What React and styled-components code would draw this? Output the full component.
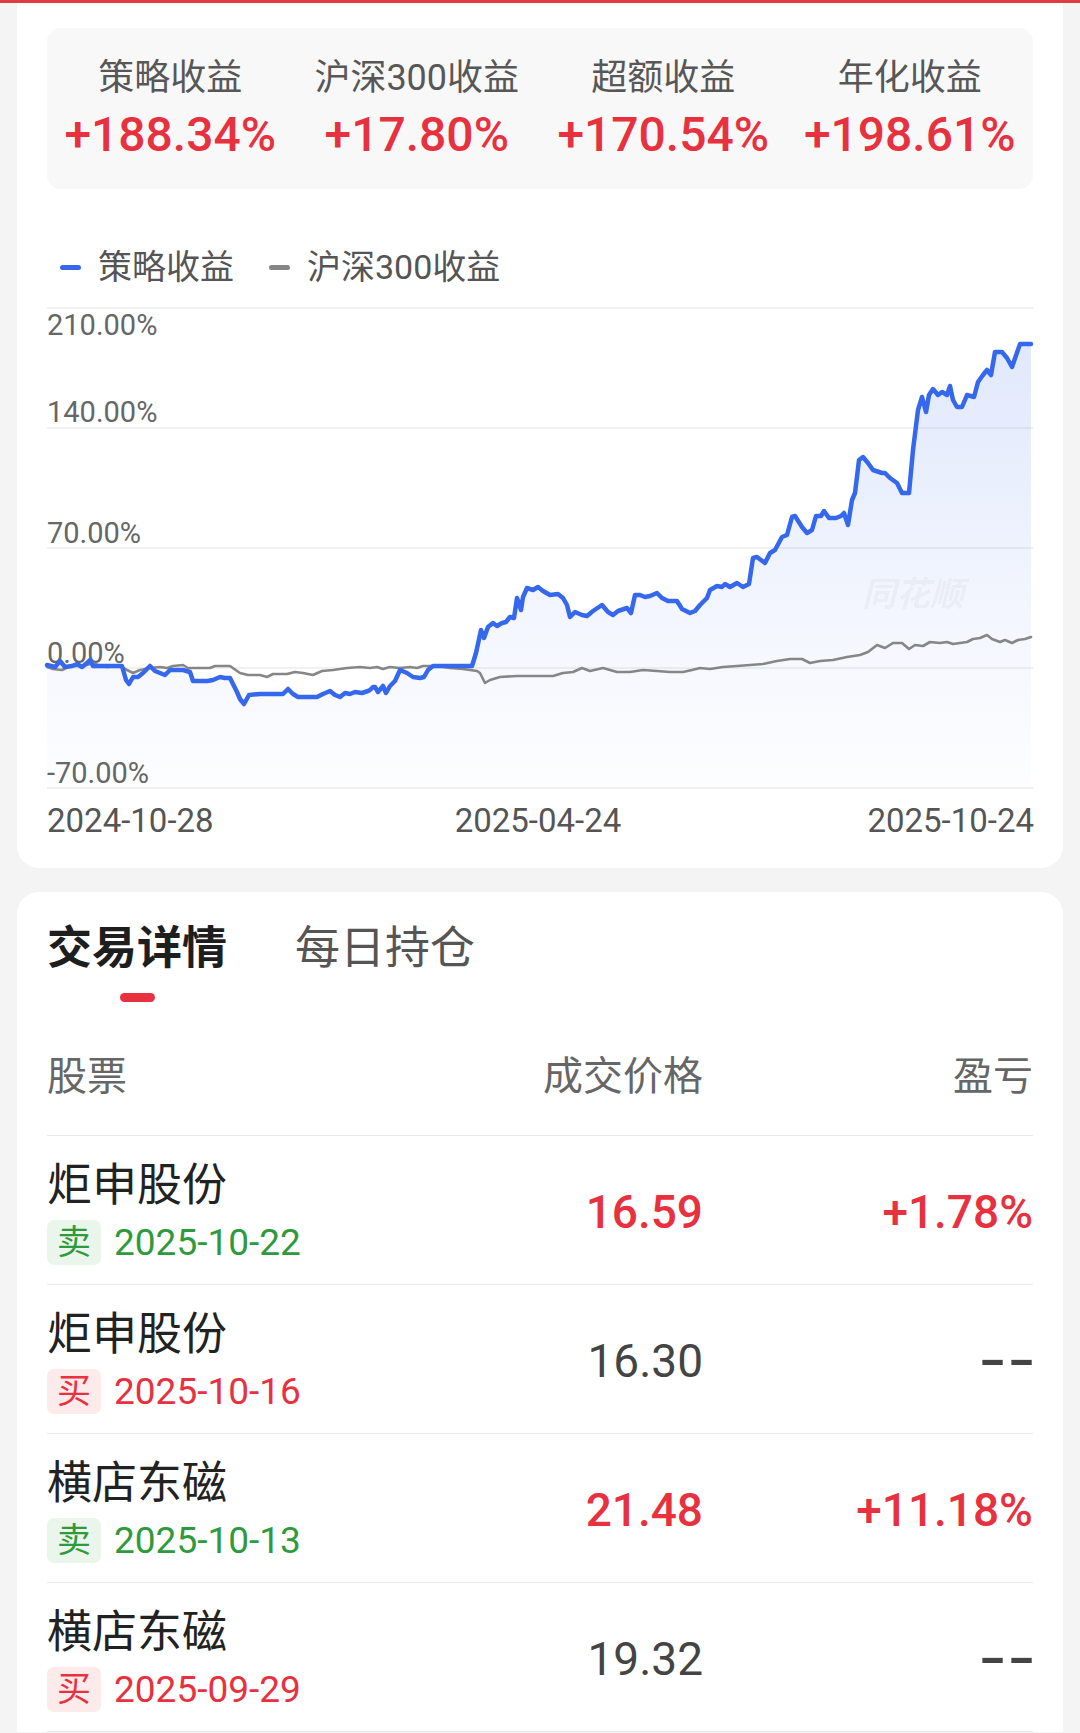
import React from "react";
import styled, { createGlobalStyle } from "styled-components";

const GlobalStyle = createGlobalStyle`
  html, body { margin: 0; padding: 0; background: #f4f4f4; }
  body { font-family: Roboto, "Noto Sans CJK SC", sans-serif; -webkit-font-smoothing: antialiased; }
  * { box-sizing: border-box; }
`;

const RED = "#e8313f";
const GREEN = "#2e9a3b";

const Page = styled.div`
  width: 1080px;
  min-height: 1733px;
  background: #f4f4f4;
  overflow: hidden;
`;

const TopBar = styled.div`
  height: 3px;
  background: #e03a45;
`;

const Card = styled.section`
  margin: ${(p) => p.$mt}px 17px 0;
  background: #fff;
  border-radius: ${(p) => p.$radius};
  padding: ${(p) => p.$pad};
`;

const StatsBox = styled.div`
  display: grid;
  grid-template-columns: repeat(4, 1fr);
  height: 161px;
  padding-top: 28px;
  background: #f8f8f8;
  border-radius: 14px;
`;

const Stat = styled.div`
  display: flex;
  flex-direction: column;
  align-items: center;
`;

const StatLabel = styled.div`
  font-size: 36px;
  line-height: 44px;
  color: #575757;
  white-space: nowrap;
`;

const StatValue = styled.div`
  margin-top: 6px;
  font-size: 48px;
  line-height: 58px;
  font-weight: 500;
  color: ${RED};
  white-space: nowrap;
`;

const Legend = styled.div`
  display: flex;
  align-items: center;
  gap: 35px;
  height: 40px;
  margin-top: 58px;
  padding-left: 13px;
`;

const LegendItem = styled.div`
  display: flex;
  align-items: center;
  gap: 17px;
  font-size: 34px;
  line-height: 40px;
  color: #555;
`;

const Swatch = styled.span`
  width: 21px;
  height: 5px;
  border-radius: 3px;
  background: ${(p) => p.$color};
`;

const ChartSvg = styled.svg`
  display: block;
  width: 986px;
  height: 560px;
  overflow: visible;
`;

const Tabs = styled.div`
  display: flex;
  gap: 68px;
`;

const Tab = styled.div`
  display: flex;
  flex-direction: column;
  align-items: center;
  font-size: 45px;
  line-height: 60px;
  font-weight: ${(p) => (p.$active ? 700 : 400)};
  color: ${(p) => (p.$active ? "#1e1e1e" : "#555")};
`;

const TabIndicator = styled.span`
  margin-top: 14px;
  width: 35px;
  height: 9px;
  border-radius: 5px;
  background: ${(p) => (p.$active ? RED : "transparent")};
`;

const TableRow = styled.div`
  display: grid;
  grid-template-columns: 1fr 200px 330px;
  align-items: center;
  border-bottom: 1px solid #e9e9e9;
  padding: ${(p) => p.$pad};
`;

const HeadCell = styled.div`
  font-size: 40px;
  line-height: 50px;
  color: #666;
  text-align: ${(p) => p.$align || "left"};
`;

const StockCell = styled.div`
  display: flex;
  flex-direction: column;
`;

const StockName = styled.div`
  font-size: 45px;
  line-height: 54px;
  color: #222;
`;

const Meta = styled.div`
  display: flex;
  align-items: center;
  gap: 13px;
  margin-top: 7px;
`;

const Badge = styled.span`
  height: 45px;
  padding: 0 10px;
  border-radius: 7px;
  font-size: 34px;
  line-height: 45px;
  color: ${(p) => (p.$sell ? GREEN : RED)};
  background: ${(p) => (p.$sell ? "#eaf6ec" : "#fdeaeb")};
`;

const DateText = styled.span`
  font-size: 37px;
  line-height: 45px;
  color: ${(p) => (p.$sell ? GREEN : RED)};
`;

const NumCell = styled.div`
  font-size: 46px;
  line-height: 56px;
  font-weight: ${(p) => (p.$red ? 500 : 400)};
  text-align: right;
  color: ${(p) => (p.$red ? RED : "#444")};
`;

const Placeholder = styled.span`
  display: inline-block;
  margin-right: -3px;
  transform: scaleX(1.6);
  transform-origin: right center;
  font-weight: 700;
`;

const blue = [
  [47,665],[55,667],[60,661],[65,667],[72,666],[77,664],[82,667],[87,663],[90,660],[93,666],[107,666],[122,666],[126,680],[129,684],[133,677],[138,677],[143,673],[150,666],[155,671],[160,673],[165,675],[170,670],[177,670],[183,670],[190,672],[193,681],[200,681],[207,681],[213,680],[220,677],[225,678],[230,678],[237,692],[240,699],[244,704],[249,695],[260,694],[273,694],[283,694],[288,689],[293,694],[298,697],[307,697],[317,697],[323,694],[330,691],[335,695],[340,697],[345,693],[350,694],[355,692],[362,693],[368,691],[370,690],[373,687],[375,687],[378,692],[383,686],[386,693],[390,686],[395,681],[400,670],[407,673],[413,677],[420,678],[424,677],[428,670],[433,666],[453,666],[472,666],[476,653],[481,630],[484,638],[488,627],[493,623],[497,626],[502,623],[506,622],[510,617],[514,618],[517,598],[521,610],[523,597],[527,588],[533,590],[538,587],[543,591],[550,595],[558,594],[563,598],[567,605],[570,617],[575,612],[582,615],[587,616],[593,611],[602,605],[608,612],[613,615],[618,611],[627,608],[631,613],[635,595],[640,595],[645,597],[650,596],[657,593],[662,598],[668,601],[677,601],[682,609],[690,613],[695,611],[700,605],[707,598],[710,590],[717,586],[722,587],[725,584],[730,587],[737,583],[743,587],[749,584],[753,558],[757,557],[765,563],[770,553],[775,550],[782,537],[787,535],[792,517],[795,516],[802,527],[807,533],[812,530],[816,516],[821,516],[824,511],[829,518],[836,518],[841,516],[844,513],[848,525],[852,500],[855,493],[859,460],[863,457],[868,463],[873,470],[882,473],[885,473],[890,478],[897,483],[902,493],[909,493],[913,450],[918,410],[922,397],[926,412],[929,395],[933,389],[938,395],[942,392],[947,395],[950,386],[953,400],[957,407],[962,407],[967,395],[974,397],[978,382],[983,375],[987,370],[991,375],[995,352],[1002,352],[1007,358],[1012,367],[1020,344],[1025,344],[1031,344]
];

const grey = [
  [47,667],[53,669],[62,670],[68,667],[77,666],[87,665],[93,663],[100,666],[107,667],[120,666],[127,670],[133,673],[140,670],[150,668],[160,667],[167,668],[173,666],[183,665],[188,668],[197,668],[210,668],[215,666],[230,666],[240,673],[248,675],[260,675],[267,677],[273,674],[287,674],[295,672],[303,673],[313,675],[322,671],[333,670],[340,669],[347,668],[360,667],[370,668],[377,667],[383,669],[390,667],[400,668],[410,667],[417,668],[423,666],[437,666],[450,668],[463,669],[477,671],[480,673],[485,683],[490,680],[500,677],[517,676],[537,676],[553,676],[563,673],[573,672],[582,668],[590,671],[603,668],[617,672],[630,672],[643,670],[657,671],[670,672],[683,672],[692,670],[700,668],[710,669],[723,667],[737,666],[750,665],[763,664],[777,661],[790,659],[802,659],[810,663],[820,661],[833,660],[847,657],[860,655],[868,652],[877,645],[885,648],[893,643],[902,643],[909,649],[915,645],[923,646],[930,642],[940,643],[947,642],[953,644],[967,642],[973,639],[980,638],[987,635],[992,639],[1000,642],[1005,640],[1012,643],[1018,640],[1025,639],[1031,637]
];

const toLine = (pts) => pts.map(([x, y], i) => `${i ? "L" : "M"}${x} ${y}`).join(" ");
const areaPath = `${toLine(blue)} L1031 789 L47 789 Z`;

const gridYs = [308, 428, 548, 668, 788];
const yTicks = [
  { t: "210.00%", y: 335 },
  { t: "140.00%", y: 422 },
  { t: "70.00%", y: 543 },
  { t: "0.00%", y: 663 },
  { t: "-70.00%", y: 783 },
];

const Chart = () => (
  <ChartSvg viewBox="47 287 986 560">
    <defs>
      <linearGradient id="area" x1="0" y1="344" x2="0" y2="789" gradientUnits="userSpaceOnUse">
        <stop offset="0" stopColor="#3568ec" stopOpacity="0.15" />
        <stop offset="0.6" stopColor="#3568ec" stopOpacity="0.06" />
        <stop offset="1" stopColor="#3568ec" stopOpacity="0.01" />
      </linearGradient>
    </defs>
    {gridYs.map((y) => (
      <line key={y} x1="47" x2="1034" y1={y} y2={y} stroke="#ececec" strokeWidth="1.5" />
    ))}
    <path d={areaPath} fill="url(#area)" />
    <text x="862" y="606" fontSize="34" fontWeight="700" fontStyle="italic" fill="#000" fillOpacity="0.05"
      fontFamily='"Noto Sans CJK SC", sans-serif'>同花顺</text>
    {yTicks.map((k) => (
      <text key={k.t} x="47" y={k.y} fontSize="29" fill="#666" fontFamily="Roboto, sans-serif">{k.t}</text>
    ))}
    <path d={toLine(grey)} fill="none" stroke="#868686" strokeWidth="2.6" strokeLinejoin="round" strokeLinecap="round" />
    <path d={toLine(blue)} fill="none" stroke="#3568ec" strokeWidth="4.5" strokeLinejoin="round" strokeLinecap="round" />
    <g fontSize="33" fill="#555" fontFamily="Roboto, sans-serif">
      <text x="47" y="832">2024-10-28</text>
      <text x="538" y="832" textAnchor="middle">2025-04-24</text>
      <text x="1034" y="832" textAnchor="end">2025-10-24</text>
    </g>
  </ChartSvg>
);

const stats = [
  { label: "策略收益", value: "+188.34%" },
  { label: "沪深300收益", value: "+17.80%" },
  { label: "超额收益", value: "+170.54%" },
  { label: "年化收益", value: "+198.61%" },
];

const trades = [
  { name: "炬申股份", sell: true, date: "2025-10-22", price: "16.59", profit: "+1.78%" },
  { name: "炬申股份", sell: false, date: "2025-10-16", price: "16.30", profit: null },
  { name: "横店东磁", sell: true, date: "2025-10-13", price: "21.48", profit: "+11.18%" },
  { name: "横店东磁", sell: false, date: "2025-09-29", price: "19.32", profit: null },
];

export default function App() {
  return (
    <Page>
      <GlobalStyle />
      <TopBar />
      <Card $mt={0} $radius="0 0 22px 22px" $pad="25px 30px 21px">
        <StatsBox>
          {stats.map((s) => (
            <Stat key={s.label}>
              <StatLabel>{s.label}</StatLabel>
              <StatValue>{s.value}</StatValue>
            </Stat>
          ))}
        </StatsBox>
        <Legend>
          <LegendItem>
            <Swatch $color="#3568ec" />
            策略收益
          </LegendItem>
          <LegendItem>
            <Swatch $color="#868686" />
            沪深300收益
          </LegendItem>
        </Legend>
        <Chart />
      </Card>
      <Card $mt={24} $radius="22px 22px 0 0" $pad="27px 30px 0">
        <Tabs>
          <Tab $active>
            交易详情
            <TabIndicator $active />
          </Tab>
          <Tab>
            每日持仓
            <TabIndicator />
          </Tab>
        </Tabs>
        <TableRow $pad="50px 0 33px">
          <HeadCell>股票</HeadCell>
          <HeadCell $align="right">成交价格</HeadCell>
          <HeadCell $align="right">盈亏</HeadCell>
        </TableRow>
        {trades.map((t, i) => (
          <TableRow key={i} $pad="23px 0 19px">
            <StockCell>
              <StockName>{t.name}</StockName>
              <Meta>
                <Badge $sell={t.sell}>{t.sell ? "卖" : "买"}</Badge>
                <DateText $sell={t.sell}>{t.date}</DateText>
              </Meta>
            </StockCell>
            <NumCell $red={t.sell}>{t.price}</NumCell>
            <NumCell $red={!!t.profit}>
              {t.profit ? t.profit : <Placeholder>--</Placeholder>}
            </NumCell>
          </TableRow>
        ))}
      </Card>
    </Page>
  );
}
